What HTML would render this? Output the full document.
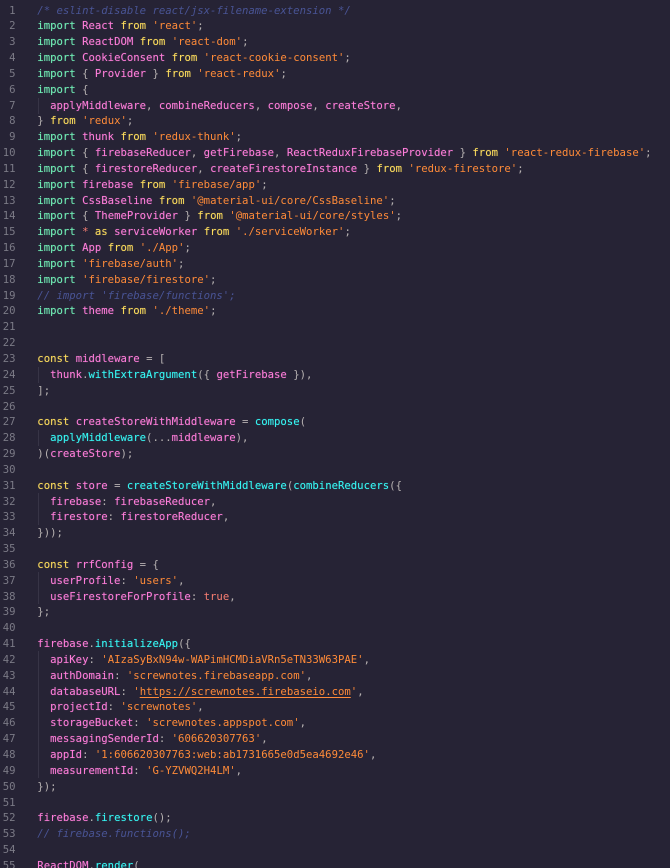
<!DOCTYPE html>
<html><head><meta charset="utf-8">
<style>
html,body{margin:0;padding:0;background:#262335;width:670px;height:868px;overflow:hidden}
#e{position:relative;width:670px;height:868px;overflow:hidden;background:#262335;font-family:"DejaVu Sans Mono","Liberation Mono",monospace;font-size:10.63px;letter-spacing:0}
.n,.c{position:absolute;white-space:pre;line-height:16px;height:16px;margin-top:.5px}
.n{left:0;width:15.5px;text-align:right;color:#7b7a86}
.c{left:37.3px;color:#bbbbbb}
.g{position:absolute;left:37.5px;width:1px;background:#373446}
i{font-style:italic;color:#495495}
.k{color:#72f1b8;text-shadow:0 0 1px rgba(114,241,184,.35)}
.y{color:#fede5d;text-shadow:0 0 1px rgba(254,222,93,.35)}
.v{color:#ff7edb;text-shadow:0 0 1px rgba(255,126,219,.35)}
.f{color:#36f9f6;text-shadow:0 0 1px rgba(54,249,246,.35)}
.s{color:#ff8b39}
.p{color:#b6b1b1}
.u{text-decoration:underline;text-underline-offset:2px}
.b{color:#f97e72}
</style></head><body><div id="e">
<div class="g" style="top:98px;height:16px"></div>
<div class="g" style="top:367px;height:16px"></div>
<div class="g" style="top:430px;height:16px"></div>
<div class="g" style="top:493px;height:32px"></div>
<div class="g" style="top:572px;height:32px"></div>
<div class="g" style="top:651px;height:127px"></div>

<div class="n" style="top:2px">1</div><div class="c" style="top:2px"><i>/* eslint-disable react/jsx-filename-extension */</i></div>
<div class="n" style="top:17.84px">2</div><div class="c" style="top:17.84px"><span class="k">import</span> <span class="v">React</span> <span class="y">from</span> <span class="s">'react'</span><span class="p">;</span></div>
<div class="n" style="top:33.68px">3</div><div class="c" style="top:33.68px"><span class="k">import</span> <span class="v">ReactDOM</span> <span class="y">from</span> <span class="s">'react-dom'</span><span class="p">;</span></div>
<div class="n" style="top:49.52px">4</div><div class="c" style="top:49.52px"><span class="k">import</span> <span class="v">CookieConsent</span> <span class="y">from</span> <span class="s">'react-cookie-consent'</span><span class="p">;</span></div>
<div class="n" style="top:65.36px">5</div><div class="c" style="top:65.36px"><span class="k">import</span> <span class="p">{</span> <span class="v">Provider</span> <span class="p">}</span> <span class="y">from</span> <span class="s">'react-redux'</span><span class="p">;</span></div>
<div class="n" style="top:81.2px">6</div><div class="c" style="top:81.2px"><span class="k">import</span> <span class="p">{</span></div>
<div class="n" style="top:97.04px">7</div><div class="c" style="top:97.04px">  <span class="v">applyMiddleware</span><span class="p">,</span> <span class="v">combineReducers</span><span class="p">,</span> <span class="v">compose</span><span class="p">,</span> <span class="v">createStore</span><span class="p">,</span></div>
<div class="n" style="top:112.88px">8</div><div class="c" style="top:112.88px"><span class="p">}</span> <span class="y">from</span> <span class="s">'redux'</span><span class="p">;</span></div>
<div class="n" style="top:128.72px">9</div><div class="c" style="top:128.72px"><span class="k">import</span> <span class="v">thunk</span> <span class="y">from</span> <span class="s">'redux-thunk'</span><span class="p">;</span></div>
<div class="n" style="top:144.56px">10</div><div class="c" style="top:144.56px"><span class="k">import</span> <span class="p">{</span> <span class="v">firebaseReducer</span><span class="p">,</span> <span class="v">getFirebase</span><span class="p">,</span> <span class="v">ReactReduxFirebaseProvider</span> <span class="p">}</span> <span class="y">from</span> <span class="s">'react-redux-firebase'</span><span class="p">;</span></div>
<div class="n" style="top:160.4px">11</div><div class="c" style="top:160.4px"><span class="k">import</span> <span class="p">{</span> <span class="v">firestoreReducer</span><span class="p">,</span> <span class="v">createFirestoreInstance</span> <span class="p">}</span> <span class="y">from</span> <span class="s">'redux-firestore'</span><span class="p">;</span></div>
<div class="n" style="top:176.24px">12</div><div class="c" style="top:176.24px"><span class="k">import</span> <span class="v">firebase</span> <span class="y">from</span> <span class="s">'firebase/app'</span><span class="p">;</span></div>
<div class="n" style="top:192.08px">13</div><div class="c" style="top:192.08px"><span class="k">import</span> <span class="v">CssBaseline</span> <span class="y">from</span> <span class="s">'@material-ui/core/CssBaseline'</span><span class="p">;</span></div>
<div class="n" style="top:207.92px">14</div><div class="c" style="top:207.92px"><span class="k">import</span> <span class="p">{</span> <span class="v">ThemeProvider</span> <span class="p">}</span> <span class="y">from</span> <span class="s">'@material-ui/core/styles'</span><span class="p">;</span></div>
<div class="n" style="top:223.76px">15</div><div class="c" style="top:223.76px"><span class="k">import</span> <span class="b">*</span> <span class="y">as</span> <span class="v">serviceWorker</span> <span class="y">from</span> <span class="s">'./serviceWorker'</span><span class="p">;</span></div>
<div class="n" style="top:239.6px">16</div><div class="c" style="top:239.6px"><span class="k">import</span> <span class="v">App</span> <span class="y">from</span> <span class="s">'./App'</span><span class="p">;</span></div>
<div class="n" style="top:255.44px">17</div><div class="c" style="top:255.44px"><span class="k">import</span> <span class="s">'firebase/auth'</span><span class="p">;</span></div>
<div class="n" style="top:271.28px">18</div><div class="c" style="top:271.28px"><span class="k">import</span> <span class="s">'firebase/firestore'</span><span class="p">;</span></div>
<div class="n" style="top:287.12px">19</div><div class="c" style="top:287.12px"><i>// import 'firebase/functions';</i></div>
<div class="n" style="top:302.96px">20</div><div class="c" style="top:302.96px"><span class="k">import</span> <span class="v">theme</span> <span class="y">from</span> <span class="s">'./theme'</span><span class="p">;</span></div>
<div class="n" style="top:318.8px">21</div>
<div class="n" style="top:334.64px">22</div>
<div class="n" style="top:350.48px">23</div><div class="c" style="top:350.48px"><span class="y">const</span> <span class="v">middleware</span> <span class="p">=</span> <span class="p">[</span></div>
<div class="n" style="top:366.32px">24</div><div class="c" style="top:366.32px">  <span class="v">thunk</span><span class="p">.</span><span class="f">withExtraArgument</span><span class="p">({</span> <span class="v">getFirebase</span> <span class="p">}),</span></div>
<div class="n" style="top:382.16px">25</div><div class="c" style="top:382.16px"><span class="p">];</span></div>
<div class="n" style="top:398px">26</div>
<div class="n" style="top:413.84px">27</div><div class="c" style="top:413.84px"><span class="y">const</span> <span class="v">createStoreWithMiddleware</span> <span class="p">=</span> <span class="f">compose</span><span class="p">(</span></div>
<div class="n" style="top:429.68px">28</div><div class="c" style="top:429.68px">  <span class="f">applyMiddleware</span><span class="p">(...</span><span class="v">middleware</span><span class="p">),</span></div>
<div class="n" style="top:445.52px">29</div><div class="c" style="top:445.52px"><span class="p">)(</span><span class="v">createStore</span><span class="p">);</span></div>
<div class="n" style="top:461.36px">30</div>
<div class="n" style="top:477.2px">31</div><div class="c" style="top:477.2px"><span class="y">const</span> <span class="v">store</span> <span class="p">=</span> <span class="f">createStoreWithMiddleware</span><span class="p">(</span><span class="f">combineReducers</span><span class="p">({</span></div>
<div class="n" style="top:493.04px">32</div><div class="c" style="top:493.04px">  <span class="v">firebase</span><span class="p">:</span> <span class="v">firebaseReducer</span><span class="p">,</span></div>
<div class="n" style="top:508.88px">33</div><div class="c" style="top:508.88px">  <span class="v">firestore</span><span class="p">:</span> <span class="v">firestoreReducer</span><span class="p">,</span></div>
<div class="n" style="top:524.72px">34</div><div class="c" style="top:524.72px"><span class="p">}));</span></div>
<div class="n" style="top:540.56px">35</div>
<div class="n" style="top:556.4px">36</div><div class="c" style="top:556.4px"><span class="y">const</span> <span class="v">rrfConfig</span> <span class="p">=</span> <span class="p">{</span></div>
<div class="n" style="top:572.24px">37</div><div class="c" style="top:572.24px">  <span class="v">userProfile</span><span class="p">:</span> <span class="s">'users'</span><span class="p">,</span></div>
<div class="n" style="top:588.08px">38</div><div class="c" style="top:588.08px">  <span class="v">useFirestoreForProfile</span><span class="p">:</span> <span class="b">true</span><span class="p">,</span></div>
<div class="n" style="top:603.92px">39</div><div class="c" style="top:603.92px"><span class="p">};</span></div>
<div class="n" style="top:619.76px">40</div>
<div class="n" style="top:635.6px">41</div><div class="c" style="top:635.6px"><span class="v">firebase</span><span class="p">.</span><span class="f">initializeApp</span><span class="p">({</span></div>
<div class="n" style="top:651.44px">42</div><div class="c" style="top:651.44px">  <span class="v">apiKey</span><span class="p">:</span> <span class="s">'AIzaSyBxN94w-WAPimHCMDiaVRn5eTN33W63PAE'</span><span class="p">,</span></div>
<div class="n" style="top:667.28px">43</div><div class="c" style="top:667.28px">  <span class="v">authDomain</span><span class="p">:</span> <span class="s">'screwnotes.firebaseapp.com'</span><span class="p">,</span></div>
<div class="n" style="top:683.12px">44</div><div class="c" style="top:683.12px">  <span class="v">databaseURL</span><span class="p">:</span> <span class="s">'<span class="u">https://screwnotes.firebaseio.com</span>'</span><span class="p">,</span></div>
<div class="n" style="top:698.96px">45</div><div class="c" style="top:698.96px">  <span class="v">projectId</span><span class="p">:</span> <span class="s">'screwnotes'</span><span class="p">,</span></div>
<div class="n" style="top:714.8px">46</div><div class="c" style="top:714.8px">  <span class="v">storageBucket</span><span class="p">:</span> <span class="s">'screwnotes.appspot.com'</span><span class="p">,</span></div>
<div class="n" style="top:730.64px">47</div><div class="c" style="top:730.64px">  <span class="v">messagingSenderId</span><span class="p">:</span> <span class="s">'606620307763'</span><span class="p">,</span></div>
<div class="n" style="top:746.48px">48</div><div class="c" style="top:746.48px">  <span class="v">appId</span><span class="p">:</span> <span class="s">'1:606620307763:web:ab1731665e0d5ea4692e46'</span><span class="p">,</span></div>
<div class="n" style="top:762.32px">49</div><div class="c" style="top:762.32px">  <span class="v">measurementId</span><span class="p">:</span> <span class="s">'G-YZVWQ2H4LM'</span><span class="p">,</span></div>
<div class="n" style="top:778.16px">50</div><div class="c" style="top:778.16px"><span class="p">});</span></div>
<div class="n" style="top:794px">51</div>
<div class="n" style="top:809.84px">52</div><div class="c" style="top:809.84px"><span class="v">firebase</span><span class="p">.</span><span class="f">firestore</span><span class="p">();</span></div>
<div class="n" style="top:825.68px">53</div><div class="c" style="top:825.68px"><i>// firebase.functions();</i></div>
<div class="n" style="top:841.52px">54</div>
<div class="n" style="top:857.36px">55</div><div class="c" style="top:857.36px"><span class="v">ReactDOM</span><span class="p">.</span><span class="f">render</span><span class="p">(</span></div>
</div></body></html>
